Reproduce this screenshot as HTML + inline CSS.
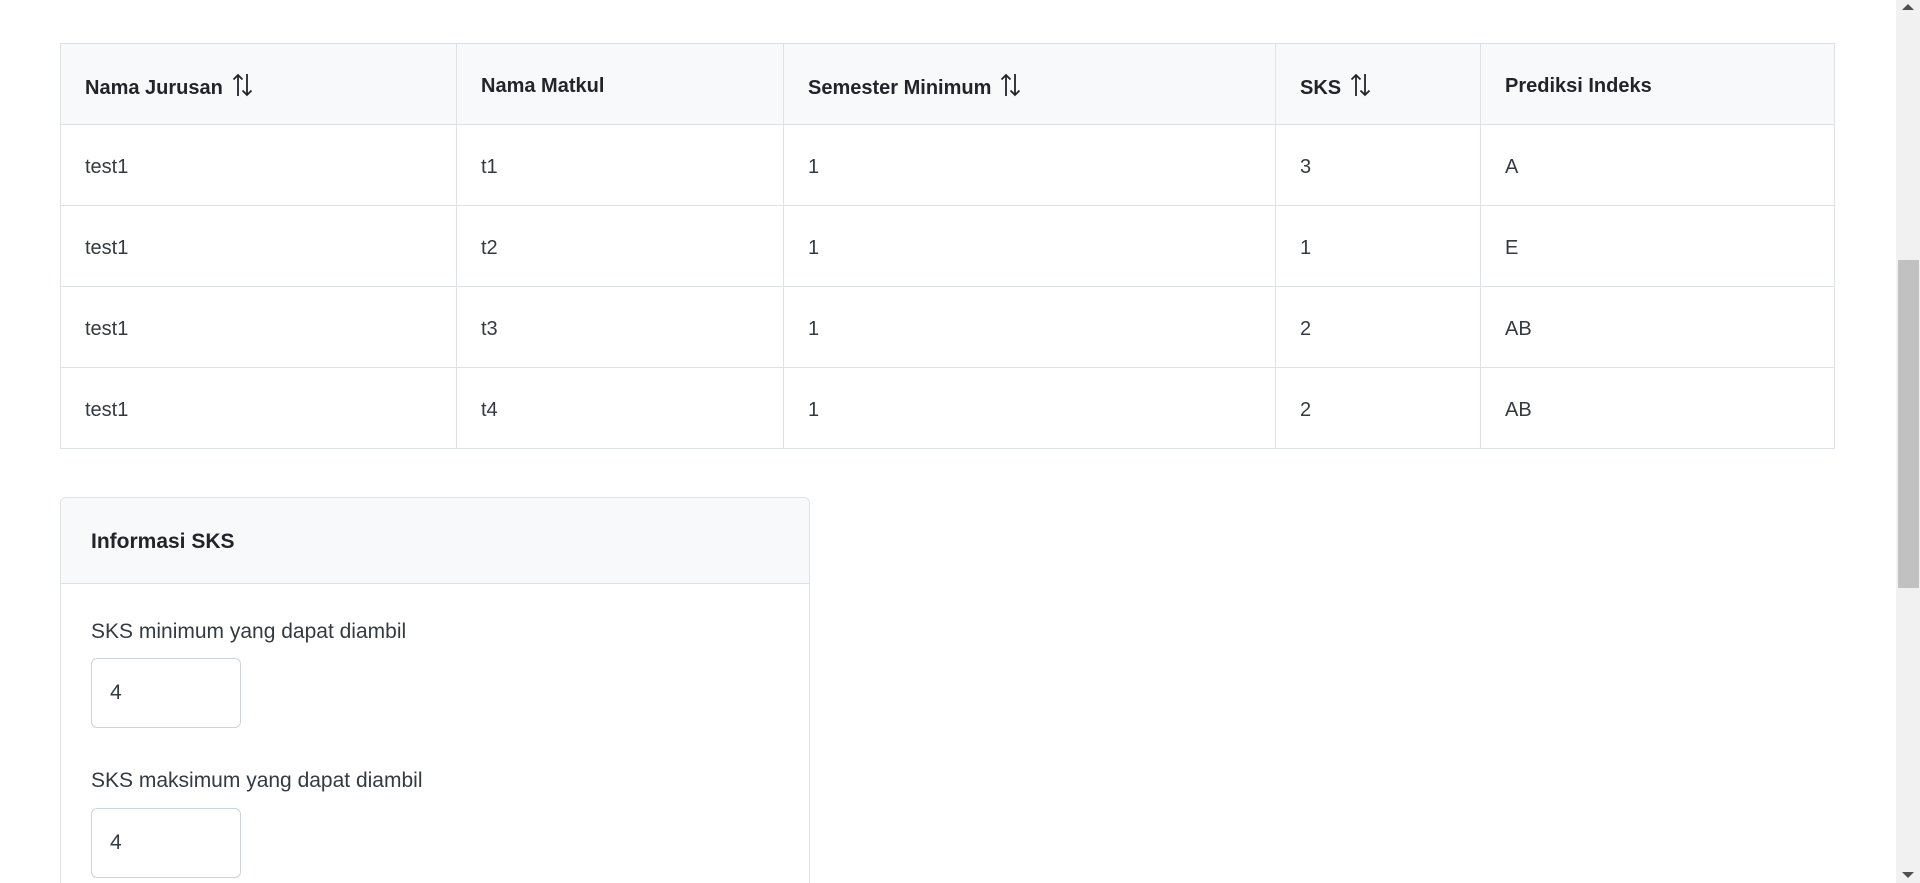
<!DOCTYPE html>
<html><head><meta charset="utf-8"><style>
html,body{margin:0;padding:0;width:1920px;height:883px;overflow:hidden;background:#fff;font-family:"Liberation Sans",Arial,sans-serif;color:#212529;}
table{position:absolute;left:60px;top:43px;width:1775px;border-collapse:collapse;font-size:20px;}
td,th{border:1px solid #dee2e6;height:81px;padding:0 0 0 24px;text-align:left;vertical-align:middle;box-sizing:border-box;}
th{background:#f8f9fa;font-weight:bold;padding-top:4px;}
td{color:#343a40;padding-top:4px;}
.s{display:inline-block;vertical-align:-4px;margin-left:8px;}
.card{position:absolute;left:60px;top:497px;width:750px;height:386px;border:1px solid #dee2e6;border-bottom:none;border-radius:6px 6px 0 0;box-sizing:border-box;overflow:hidden;}
.ch{height:85px;background:#f8f9fa;border-bottom:1px solid #dee2e6;font-weight:bold;font-size:21px;padding-left:30px;line-height:88px;}
.lab{position:absolute;left:30px;font-size:21px;color:#343a40;}
.inp{position:absolute;left:30px;width:150px;height:70px;border:1px solid #ced4da;border-radius:6px;box-sizing:border-box;font-size:21px;line-height:68px;padding-left:18px;color:#343a40;}
.sb{position:absolute;left:1896px;top:0;width:24px;height:883px;background:#f1f1f1;}
.th{position:absolute;left:1898px;top:260px;width:21px;height:328px;background:#c1c1c1;}
</style></head><body>
<table>
<colgroup><col style="width:396px"><col style="width:327px"><col style="width:492px"><col style="width:205px"><col></colgroup>
<tr><th>Nama Jurusan<svg class="s" width="24" height="26" viewBox="0 0 24 26"><path d="M7 24V3M2.5 7.5L7 3l4.5 4.5M16 2v21M11.5 18.5L16 23l4.5-4.5" stroke="#212529" stroke-width="1.8" fill="none"/></svg></th><th>Nama Matkul</th><th>Semester Minimum<svg class="s" width="24" height="26" viewBox="0 0 24 26"><path d="M7 24V3M2.5 7.5L7 3l4.5 4.5M16 2v21M11.5 18.5L16 23l4.5-4.5" stroke="#212529" stroke-width="1.8" fill="none"/></svg></th><th>SKS<svg class="s" width="24" height="26" viewBox="0 0 24 26"><path d="M7 24V3M2.5 7.5L7 3l4.5 4.5M16 2v21M11.5 18.5L16 23l4.5-4.5" stroke="#212529" stroke-width="1.8" fill="none"/></svg></th><th>Prediksi Indeks</th></tr>
<tr><td>test1</td><td>t1</td><td>1</td><td>3</td><td>A</td></tr>
<tr><td>test1</td><td>t2</td><td>1</td><td>1</td><td>E</td></tr>
<tr><td>test1</td><td>t3</td><td>1</td><td>2</td><td>AB</td></tr>
<tr><td>test1</td><td>t4</td><td>1</td><td>2</td><td>AB</td></tr>
</table>
<div class="card">
<div class="ch">Informasi SKS</div>
<div class="lab" style="top:122px">SKS minimum yang dapat diambil</div>
<div class="inp" style="top:160px">4</div>
<div class="lab" style="top:271px">SKS maksimum yang dapat diambil</div>
<div class="inp" style="top:310px">4</div>
</div>
<div class="sb"></div><div class="th"></div>
<svg style="position:absolute;left:1902px;top:4px" width="12" height="8"><path d="M0 6L6 0 12 6Z" fill="#505050"/></svg>
<svg style="position:absolute;left:1902px;top:872px" width="12" height="8"><path d="M0 0L12 0 6 6Z" fill="#505050"/></svg>
</body></html>
